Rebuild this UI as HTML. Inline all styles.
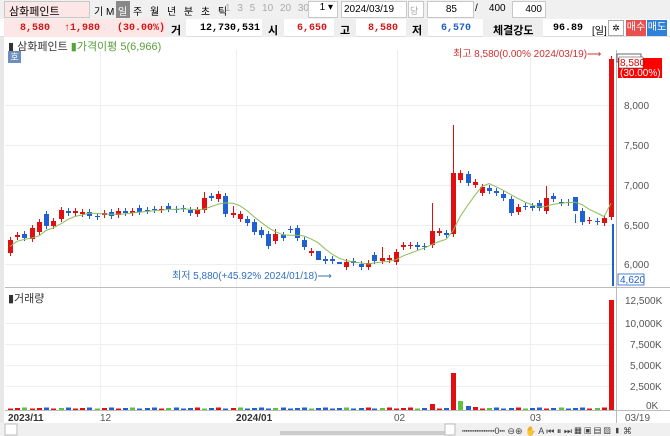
<!DOCTYPE html><html><head><meta charset="utf-8"><style>
*{margin:0;padding:0;box-sizing:border-box}
body{width:670px;height:436px;overflow:hidden;background:#fff;font-family:"Liberation Sans","Noto Sans CJK KR",sans-serif;font-size:11px;position:relative}
.a{position:absolute;white-space:nowrap}
.b{position:absolute;border:1px solid #c8c8c8;background:#fff}
.m{font-family:'Liberation Mono',monospace;font-size:10px;font-weight:bold}
</style></head><body>
<div class="a" style="left:0;top:0;width:670px;height:19px;background:#f0f0f0"></div>
<div class="b" style="left:4px;top:1px;width:86px;height:17px;background:#fde6e6;padding:1px 4px;font-size:11px">삼화페인트</div>
<div class="a" style="left:94px;top:3px;font-size:10px">기 M</div>
<div class="a" style="left:116px;top:1px;width:14px;height:17px;background:#888;color:#fff;font-size:10px;padding:2px 2px">일</div>
<div class="a" style="left:133px;top:3px;font-size:10px;word-spacing:5px">주 월 년 분 초 틱</div>
<div class="a" style="left:225px;top:3px;font-size:10px;color:#aaa;word-spacing:4px">1 3 5 10 20 30</div>
<div class="b" style="left:308px;top:1px;width:30px;height:17px;text-align:right;padding-right:4px;font-size:10px">1 ▾</div>
<div class="b" style="left:341px;top:1px;width:66px;height:17px;padding:2px 2px;font-size:10px">2024/03/19</div>
<div class="b" style="left:408px;top:1px;width:16px;height:17px;color:#aaa;font-size:9px;padding:2px 1px">당</div>
<div class="b" style="left:427px;top:1px;width:47px;height:17px;text-align:right;padding:2px 16px 0 0;font-size:10px">85</div>
<div class="a" style="left:475px;top:3px;font-size:10px">/ &nbsp;&nbsp;&nbsp;400</div>
<div class="b" style="left:512px;top:1px;width:34px;height:17px;text-align:right;padding:2px 3px 0 0;font-size:10px">400</div>
<div class="a" style="left:0;top:19px;width:670px;height:18px;background:#fff;border-bottom:1px solid #ddd"></div>
<div class="a" style="left:4px;top:19px;width:162px;height:18px;background:#fde6e6"></div>
<div class="a m" style="left:20px;top:23px;color:#d01818">8,580</div>
<div class="a m" style="left:64px;top:23px;color:#d01818">↑1,980</div>
<div class="a m" style="left:117px;top:23px;color:#d01818">(30.00%)</div>
<div class="a" style="left:166px;top:19px;width:20px;height:18px;background:#eee;font-weight:bold;padding:3px 5px">거</div>
<div class="a m" style="left:200px;top:23px">12,730,531</div>
<div class="a" style="left:262px;top:19px;width:22px;height:18px;background:#eee;font-weight:bold;padding:3px 6px">시</div>
<div class="a m" style="left:297px;top:23px;color:#d01818">6,650</div>
<div class="a" style="left:334px;top:19px;width:22px;height:18px;background:#eee;font-weight:bold;padding:3px 6px">고</div>
<div class="a m" style="left:368px;top:23px;color:#d01818">8,580</div>
<div class="a" style="left:406px;top:19px;width:22px;height:18px;background:#eee;font-weight:bold;padding:3px 6px">저</div>
<div class="a m" style="left:441px;top:23px;color:#1f5fc8">6,570</div>
<div class="a" style="left:483px;top:19px;width:60px;height:18px;background:#eee;font-weight:bold;padding:3px 10px">체결강도</div>
<div class="a m" style="left:553px;top:23px">96.89</div>
<div class="a" style="left:592px;top:22px;font-size:10px">[일]</div>
<div class="a" style="left:608px;top:20px;width:16px;height:16px;border:1px solid #aaa;font-size:9px;text-align:center;line-height:14px">✲</div>
<div class="a" style="left:626px;top:20px;width:20px;height:16px;background:#e85050;color:#fff;font-size:10px;text-align:center;line-height:16px">매수</div>
<div class="a" style="left:647px;top:20px;width:20px;height:16px;background:#2f80d8;color:#fff;font-size:10px;text-align:center;line-height:16px">매도</div>
<div class="a" style="left:0;top:37px;width:4px;height:399px;background:#e8e8e8"></div>
<div class="a" style="left:8px;top:38px;font-size:11px;color:#333">▮ 삼화페인트 <span style="color:#5aa03c">▮가격이평 5(6,966)</span></div>
<div class="a" style="left:8px;top:51px;width:13px;height:12px;background:#6d8fbf;color:#fff;font-size:9px;text-align:center;line-height:12px">호</div>
<div class="a" style="left:8px;top:290px;font-size:11px;color:#333">▮거래량</div>
<svg class="a" style="left:0;top:0" width="670" height="436" id="s">
<g stroke="#eee" stroke-width="1">
<line x1="5" y1="105.5" x2="615" y2="105.5"/><line x1="5" y1="145.5" x2="615" y2="145.5"/><line x1="5" y1="185.5" x2="615" y2="185.5"/><line x1="5" y1="225.5" x2="615" y2="225.5"/><line x1="5" y1="264.5" x2="615" y2="264.5"/>
<line x1="5" y1="323.5" x2="615" y2="323.5"/><line x1="5" y1="344.5" x2="615" y2="344.5"/><line x1="5" y1="365.5" x2="615" y2="365.5"/><line x1="5" y1="386.5" x2="615" y2="386.5"/>
<line x1="100.5" y1="50" x2="100.5" y2="410"/><line x1="236.5" y1="50" x2="236.5" y2="410"/><line x1="397.5" y1="50" x2="397.5" y2="410"/><line x1="530.5" y1="50" x2="530.5" y2="410"/>
</g>
<line x1="5" y1="287.5" x2="670" y2="287.5" stroke="#bbb"/>
<line x1="616.5" y1="50" x2="616.5" y2="423" stroke="#bbb"/>
<line x1="5" y1="410.5" x2="670" y2="410.5" stroke="#bbb"/>
<g font-family="Liberation Sans,sans-serif" font-size="10" fill="#555">
<text x="624" y="109">8,000</text><text x="624" y="149">7,500</text><text x="624" y="189">7,000</text><text x="624" y="229">6,500</text><text x="624" y="268">6,000</text>
<text x="625" y="304">12,500K</text><text x="625" y="327">10,000K</text><text x="630" y="348">7,500K</text><text x="630" y="369">5,000K</text><text x="630" y="390">2,500K</text><text x="646" y="409">0K</text>
<text x="8" y="421" fill="#333" font-weight="bold">2023/11</text><text x="100" y="421">12</text><text x="236" y="421" fill="#333" font-weight="bold">2024/01</text><text x="394" y="421">02</text><text x="530" y="421">03</text><text x="625" y="421">03/19</text>
<text x="453" y="57" fill="#d03030">최고 8,580(0.00% 2024/03/19)⟶</text>
<text x="172" y="279" fill="#3070c0">최저 5,880(+45.92% 2024/01/18)⟶</text>
</g>
<rect x="617" y="54" width="24" height="8" fill="none" stroke="#444" stroke-width="0.8"/>
<rect x="618" y="58" width="44" height="20" fill="#f00"/>
<rect x="619" y="57" width="24" height="11" fill="#fff" stroke="#555" stroke-width="0.6"/>
<text x="620" y="66" font-size="10" fill="#d00" font-family="Liberation Sans">8,580</text>
<text x="620" y="76" font-size="10" fill="#fff" font-family="Liberation Sans">(30.00%)</text>
<rect x="612" y="224" width="2" height="62" fill="#2060d0"/>
<rect x="618" y="274" width="26" height="11" fill="#fff" stroke="#2060d0" stroke-width="0.8"/>
<text x="620" y="283" font-size="10" fill="#2060d0" font-family="Liberation Sans">4,620</text>
<g id="c"></g>
<polyline id="ma" fill="none" stroke="#8cbd5c" stroke-width="1"/>
<rect x="0" y="423" width="670" height="13" fill="#f0f0f0"/>
<rect x="5" y="424" width="12" height="11" fill="#fff" stroke="#bbb"/>
<rect x="280" y="431" width="165" height="4" fill="#ccc"/>
<rect x="445" y="424" width="10" height="11" fill="#fff" stroke="#bbb"/>
<text x="462" y="434" font-size="9" fill="#444" font-family="Liberation Sans">┅┅┅┅┅┅0┅  ⊖⊕ ✋ A ⏮ ⏸ ⏭ ▦ ▣ ▤ ▧ ▮ ⌘</text>
</svg>
<script>
var A=[[10,240,253,1],[17,235,237,1],[24,234,238,0],[32,228,239,1],[39,222,232,1],[46,214,226,0],[53,221,226,1],[61,210,219,1],[68,211,213,0],[75,211,213,1],[82,212,214,1],[89,212,216,0],[97,216,217,0],[104,213,215,1],[111,212,216,0],[118,211,215,1],[125,211,213,0],[132,211,213,1],[139,208,212,0],[147,210,211,0],[154,209,210,0],[161,209,210,1],[168,206,209,0],[176,209,210,0],[183,208,209,0],[190,210,213,0],[197,210,214,1],[204,198,210,1],[211,196,198,0],[218,194,199,1],[225,196,214,0],[233,213,215,1],[240,214,219,1],[247,219,223,0],[254,222,232,0],[261,230,235,0],[268,234,246,0],[275,234,241,1],[283,235,238,0],[290,229,230,0],[297,228,238,0],[304,240,247,0],[311,251,253,1],[318,251,260,0],[325,259,261,0],[332,259,261,0],
[339,262,264,0],[346,262,267,1],[353,261,263,0],[361,264,267,0],[368,263,267,1],[374,255,261,0],[382,258,261,1],[389,258,260,1],[396,252,262,1],[403,245,247,1],[410,245,246,1],[417,245,247,0],[424,246,247,0],[432,231,245,1],[439,231,233,1],[446,233,235,0],[453,173,234,1],[460,173,180,1],[468,174,183,0],[475,182,185,1],[482,187,193,1],[489,188,191,0],[496,191,193,0],[503,194,198,0],[511,199,213,0],[518,207,212,1],[525,206,207,0],[532,206,208,0],[539,203,208,0],[546,198,211,1],[553,196,199,0],[561,202,203,0],[568,202,203,0],[575,197,211,0],[582,211,222,0],[589,220,221,1],[597,221,222,0],[604,218,223,1],[611,59,217,1]];
var H={432:203,453:125,546:186,382:247,575:223,339:272,318:274,204:192,233:206,275:229};
var g='',ma=[];
A.forEach(function(c,i){var x=c[0],t=c[1],b=Math.max(c[2],c[1]+1),col=c[3]?'#e01010':'#2060d0';
var hi=H[x]||t-3,lo=(x==318||x==339)?(H[x]):b+3;
g+='<line x1="'+(x+.5)+'" y1="'+hi+'" x2="'+(x+.5)+'" y2="'+lo+'" stroke="'+col+'"/>';
g+='<rect x="'+(x-2)+'" y="'+t+'" width="5" height="'+(b-t)+'" fill="'+col+'"/>';
var v=x==453?37:x==611?110:x==432?6:x==460?9:x==468?4:x==475?3:1.5+((i*7)%3)*0.5;
var vc=x==460?'#60c040':(x==453||x==611||x==432||x==468||x==475)?col:(i%5==2?'#60c040':col);
if(x==468)vc='#2060d0';if(x==475)vc='#e01010';
g+='<rect x="'+(x-2)+'" y="'+(410-v)+'" width="5" height="'+v+'" fill="'+vc+'"/>';
var s=0,n=0;for(var k=Math.max(0,i-4);k<=i;k++){s+=A[k][1]+A[k][2];n+=2;}
ma.push(x+','+(s/n).toFixed(1));});
document.getElementById('c').innerHTML=g;
document.getElementById('ma').setAttribute('points',ma.join(' '));
</script>
</body></html>
